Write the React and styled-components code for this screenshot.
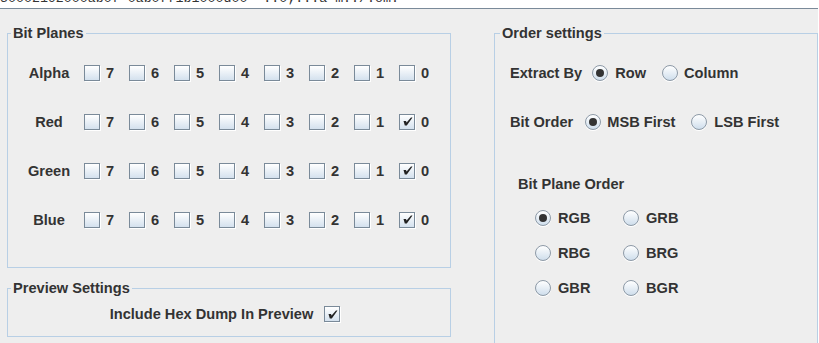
import React from "react";
import styled, { createGlobalStyle } from "styled-components";

const GlobalStyle = createGlobalStyle`
  html, body {
    margin: 0;
    padding: 0;
    background: #eeeeee;
    overflow: hidden;
  }
  body {
    font-family: "Liberation Sans", Arial, sans-serif;
    font-weight: 700;
    font-size: 14.6px;
    color: #333333;
  }
`;

const Page = styled.div`
  width: 819px;
  height: 343px;
  box-sizing: border-box;
  border-right: 1px solid #ffffff;
  display: flex;
  flex-direction: column;
  overflow: hidden;
`;

const HexStrip = styled.div`
  height: 8px;
  flex: none;
  background: #ffffff;
  border-bottom: 1px solid #7a8a99;
  overflow: hidden;
  font-family: "Liberation Mono", "Courier New", monospace;
  font-weight: 400;
  font-size: 13.3px;
  color: #333333;
  white-space: pre;

  span {
    display: block;
    line-height: 16px;
    margin-top: -9px;
  }
`;

const Body = styled.div`
  display: flex;
  padding: 16px 0 0 7px;
  gap: 43px;
`;

const LeftColumn = styled.div`
  width: 444px;
  flex: none;
  display: flex;
  flex-direction: column;
  gap: 12px;
`;

const Group = styled.fieldset`
  margin: 0;
  min-width: 0;
  box-sizing: border-box;
  border: 1px solid #b8cfe5;
  padding: ${(p) => p.$pad};
  width: ${(p) => p.$width || "auto"};
  min-height: ${(p) => p.$minHeight || "0"};
`;

const Title = styled.legend`
  padding: 0 2px;
  margin-left: ${(p) => p.$shift}px;
  line-height: 17px;
`;

const PlaneGrid = styled.div`
  display: grid;
  grid-template-columns: 64px repeat(8, 45px);
  grid-auto-rows: 49px;
  align-items: center;
`;

const PlaneLabel = styled.div`
  text-align: center;
  padding-right: 6px;
`;

const Option = styled.label`
  display: flex;
  align-items: center;
  gap: ${(p) => p.$gap || 6}px;
  white-space: nowrap;
  line-height: 20px;
`;

const Box = styled.span`
  width: 14px;
  height: 14px;
  flex: none;
  border: 1px solid #7a8a99;
  box-shadow: 1px 1px 0 #ffffff;
  background: linear-gradient(#ffffff, #d4e1ee);
  display: flex;
  align-items: center;
  justify-content: center;
`;

const Round = styled.span`
  width: 14px;
  height: 14px;
  flex: none;
  border-radius: 50%;
  border: 1px solid #8d9aa7;
  box-shadow: 0 1px 0 #ffffff;
  background: linear-gradient(#ffffff, #cfdeec);
  display: flex;
  align-items: center;
  justify-content: center;

  &::after {
    content: "";
    width: 8px;
    height: 8px;
    border-radius: 50%;
    background: #333333;
    display: ${(p) => (p.$on ? "block" : "none")};
  }
`;

const PreviewRow = styled.div`
  display: flex;
  justify-content: center;
  padding-right: 8px;
`;

const OrderStack = styled.div`
  display: flex;
  flex-direction: column;
`;

const OrderRow = styled.div`
  display: flex;
  align-items: center;
  height: 24px;
  margin-top: ${(p) => p.$top}px;
  gap: 16px;
`;

const RowLabel = styled.span`
  margin-right: ${(p) => p.$space}px;
  white-space: nowrap;
`;

const SubTitle = styled.div`
  height: 24px;
  line-height: 24px;
  margin: 38px 0 0 8px;
`;

const RadioGrid = styled.div`
  display: grid;
  grid-template-columns: repeat(2, 88px);
  grid-auto-rows: 35px;
  align-items: center;
  margin: 4px 0 0 25px;
`;

function Check() {
  return (
    <svg width="11" height="11" viewBox="0 0 11 11">
      <polygon
        points="1.5,5 4,5 4.6,6.6 9,1.5 10.5,1.5 4.8,9.5 2.8,9.5"
        fill="#222222"
      />
    </svg>
  );
}

function BitBox({ bit, checked }) {
  return (
    <Option>
      <Box>{checked && <Check />}</Box>
      <span>{bit}</span>
    </Option>
  );
}

function Radio({ label, on, gap = 7 }) {
  return (
    <Option $gap={gap}>
      <Round $on={on} />
      <span>{label}</span>
    </Option>
  );
}

const planes = [
  { name: "Alpha", lsb: false },
  { name: "Red", lsb: true },
  { name: "Green", lsb: true },
  { name: "Blue", lsb: true },
];

const bits = [7, 6, 5, 4, 3, 2, 1, 0];

export default function App() {
  return (
    <Page>
      <GlobalStyle />
      <HexStrip>
        <span>{"50002192000ab0f 0ab0ff1b1000d00  ..0;...a m../.om."}</span>
      </HexStrip>
      <Body>
        <LeftColumn>
          <Group $pad="6px 0 23px 12px">
            <Title $shift={-9}>Bit Planes</Title>
            <PlaneGrid>
              {planes.map((p) => (
                <React.Fragment key={p.name}>
                  <PlaneLabel>{p.name}</PlaneLabel>
                  {bits.map((b) => (
                    <BitBox key={b} bit={b} checked={p.lsb && b === 0} />
                  ))}
                </React.Fragment>
              ))}
            </PlaneGrid>
          </Group>
          <Group $pad="7px 0 12px 0">
            <Title $shift={3}>Preview Settings</Title>
            <PreviewRow>
              <Option $gap={11}>
                <span>Include Hex Dump In Preview</span>
                <Box>
                  <Check />
                </Box>
              </Option>
            </PreviewRow>
          </Group>
        </LeftColumn>
        <Group $pad="0 0 0 15px" $width="340px" $minHeight="340px">
          <Title $shift={-10}>Order settings</Title>
          <OrderStack>
            <OrderRow $top={19}>
              <RowLabel $space={-6}>Extract By</RowLabel>
              <Radio label="Row" on />
              <Radio label="Column" gap={6} />
            </OrderRow>
            <OrderRow $top={25}>
              <RowLabel $space={-4}>Bit Order</RowLabel>
              <Radio label="MSB First" on gap={6} />
              <Radio label="LSB First" />
            </OrderRow>
            <SubTitle>Bit Plane Order</SubTitle>
            <RadioGrid>
              <Radio label="RGB" on />
              <Radio label="GRB" />
              <Radio label="RBG" />
              <Radio label="BRG" />
              <Radio label="GBR" />
              <Radio label="BGR" />
            </RadioGrid>
          </OrderStack>
        </Group>
      </Body>
    </Page>
  );
}
